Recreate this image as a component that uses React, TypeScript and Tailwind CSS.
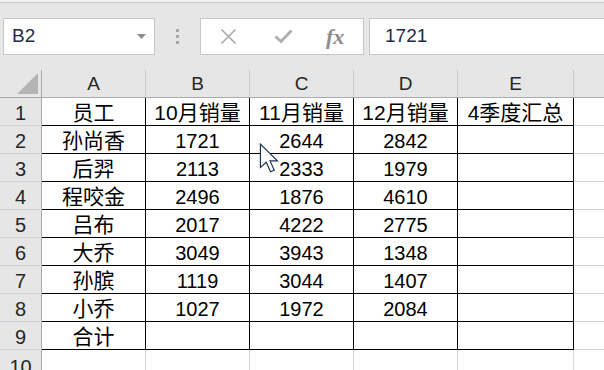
import React from "react";

const cols = ["A", "B", "C", "D", "E"];
const colW = ["w-[104px]", "w-[104px]", "w-[104px]", "w-[104px]", "w-[116px]"];

const rows: string[][] = [
  ["员工", "10月销量", "11月销量", "12月销量", "4季度汇总"],
  ["孙尚香", "1721", "2644", "2842", ""],
  ["后羿", "2113", "2333", "1979", ""],
  ["程咬金", "2496", "1876", "4610", ""],
  ["吕布", "2017", "4222", "2775", ""],
  ["大乔", "3049", "3943", "1348", ""],
  ["孙膑", "1119", "3044", "1407", ""],
  ["小乔", "1027", "1972", "2084", ""],
  ["合计", "", "", "", ""],
];

export default function App() {
  return (
    <div className="relative w-[604px] h-[370px] overflow-hidden bg-[#e6e6e6] font-['Liberation_Sans','Noto_Sans_CJK_SC',sans-serif] text-[#1a1a1a]">
      <div className="h-[2px] bg-[#f2f2f2]" />
      <div className="h-px bg-[#c8c8c8]" />
      {/* toolbar */}
      <div className="mt-[15px] flex h-[37px] pl-[3px]">
        <div className="flex w-[152px] items-center justify-between border border-[#c6c6c6] bg-white pl-[8px] pr-[8px]">
          <span className="text-[19px] text-[#1f2a44]">B2</span>
          <svg width="9" height="5" viewBox="0 0 9 5">
            <path d="M0 0 H9 L4.5 5 Z" fill="#8a8a8a" />
          </svg>
        </div>
        <div className="flex w-[45px] flex-col items-center justify-center gap-[3px]">
          <div className="h-[3px] w-[3px] bg-[#a6a6a6]" />
          <div className="h-[3px] w-[3px] bg-[#a6a6a6]" />
          <div className="h-[3px] w-[3px] bg-[#a6a6a6]" />
        </div>
        <div className="flex w-[164px] items-center border border-[#c6c6c6] bg-white">
          <svg className="ml-[19px]" width="17" height="17" viewBox="0 0 17 17">
            <path d="M1.5 1.5 L15.5 15.5 M15.5 1.5 L1.5 15.5" stroke="#a8a8a8" strokeWidth="1.6" />
          </svg>
          <svg className="ml-[37px]" width="19" height="15" viewBox="0 0 19 15">
            <path d="M1.5 7.5 L7 12.5 L17.5 1.5" stroke="#b0b0b0" strokeWidth="3" fill="none" />
          </svg>
          <span className="ml-[33px] font-['Liberation_Serif',serif] text-[22px] font-bold italic text-[#8c8c8c]">
            fx
          </span>
        </div>
        <div className="ml-[5px] flex flex-1 items-center border-y border-l border-[#c6c6c6] bg-white pl-[15px]">
          <span className="text-[19px] text-[#1f2a44]">1721</span>
        </div>
      </div>
      <div className="h-[15px]" />
      {/* column header */}
      <div className="flex h-[28px]">
        <div className="relative h-full w-[42px] border-r border-b border-[#ababab]">
          <svg className="absolute left-[17px] top-[3px]" width="21" height="21" viewBox="0 0 21 21">
            <path d="M21 0 L21 21 L0 21 Z" fill="#b4b4b4" />
          </svg>
        </div>
        {cols.map((c, i) => (
          <div
            key={c}
            className={`${colW[i]} flex h-full items-center justify-center border-r border-b border-r-[#c8c8c8] border-b-[#ababab] pt-[2px] text-[19px] text-[#262626]`}
          >
            {c}
          </div>
        ))}
        <div className="h-full flex-1 border-b border-[#ababab]" />
      </div>
      {/* data rows */}
      {rows.map((r, ri) => (
        <div key={ri} className="flex h-[28px]">
          <div className="flex h-full w-[42px] items-center justify-center border-r border-b border-r-[#ababab] border-b-[#d0d0d0] pt-[2px] text-[20px] text-[#262626]">
            {ri + 1}
          </div>
          {r.map((v, ci) => (
            <div
              key={ci}
              className={`${colW[ci]} flex h-full items-center justify-center border-r border-b border-black bg-white pt-[2px] text-black ${
                ri === 0 || ci === 0 ? "text-[21px]" : "text-[20px]"
              }`}
            >
              {v}
            </div>
          ))}
          <div className="h-full flex-1 border-b border-[#d4d4d4] bg-white" />
        </div>
      ))}
      <div className="flex h-[28px]">
        <div className="flex h-full w-[42px] items-start justify-center border-r border-[#ababab] pt-[2px] text-[20px] text-[#262626]">
          10
        </div>
        {cols.map((c, i) => (
          <div key={c} className={`${colW[i]} h-full border-r border-[#d4d4d4] bg-white`} />
        ))}
        <div className="h-full flex-1 bg-white" />
      </div>
      {/* mouse cursor */}
      <svg className="absolute left-[259px] top-[143px]" width="22" height="32" viewBox="0 0 20 30">
        <path
          d="M1 1 L1 23 L6.5 18 L10.5 27 L14 25.5 L10 16.8 L17 16.8 Z"
          fill="white"
          stroke="#1f2f55"
          strokeWidth="1.1"
          strokeLinejoin="miter"
        />
      </svg>
    </div>
  );
}
